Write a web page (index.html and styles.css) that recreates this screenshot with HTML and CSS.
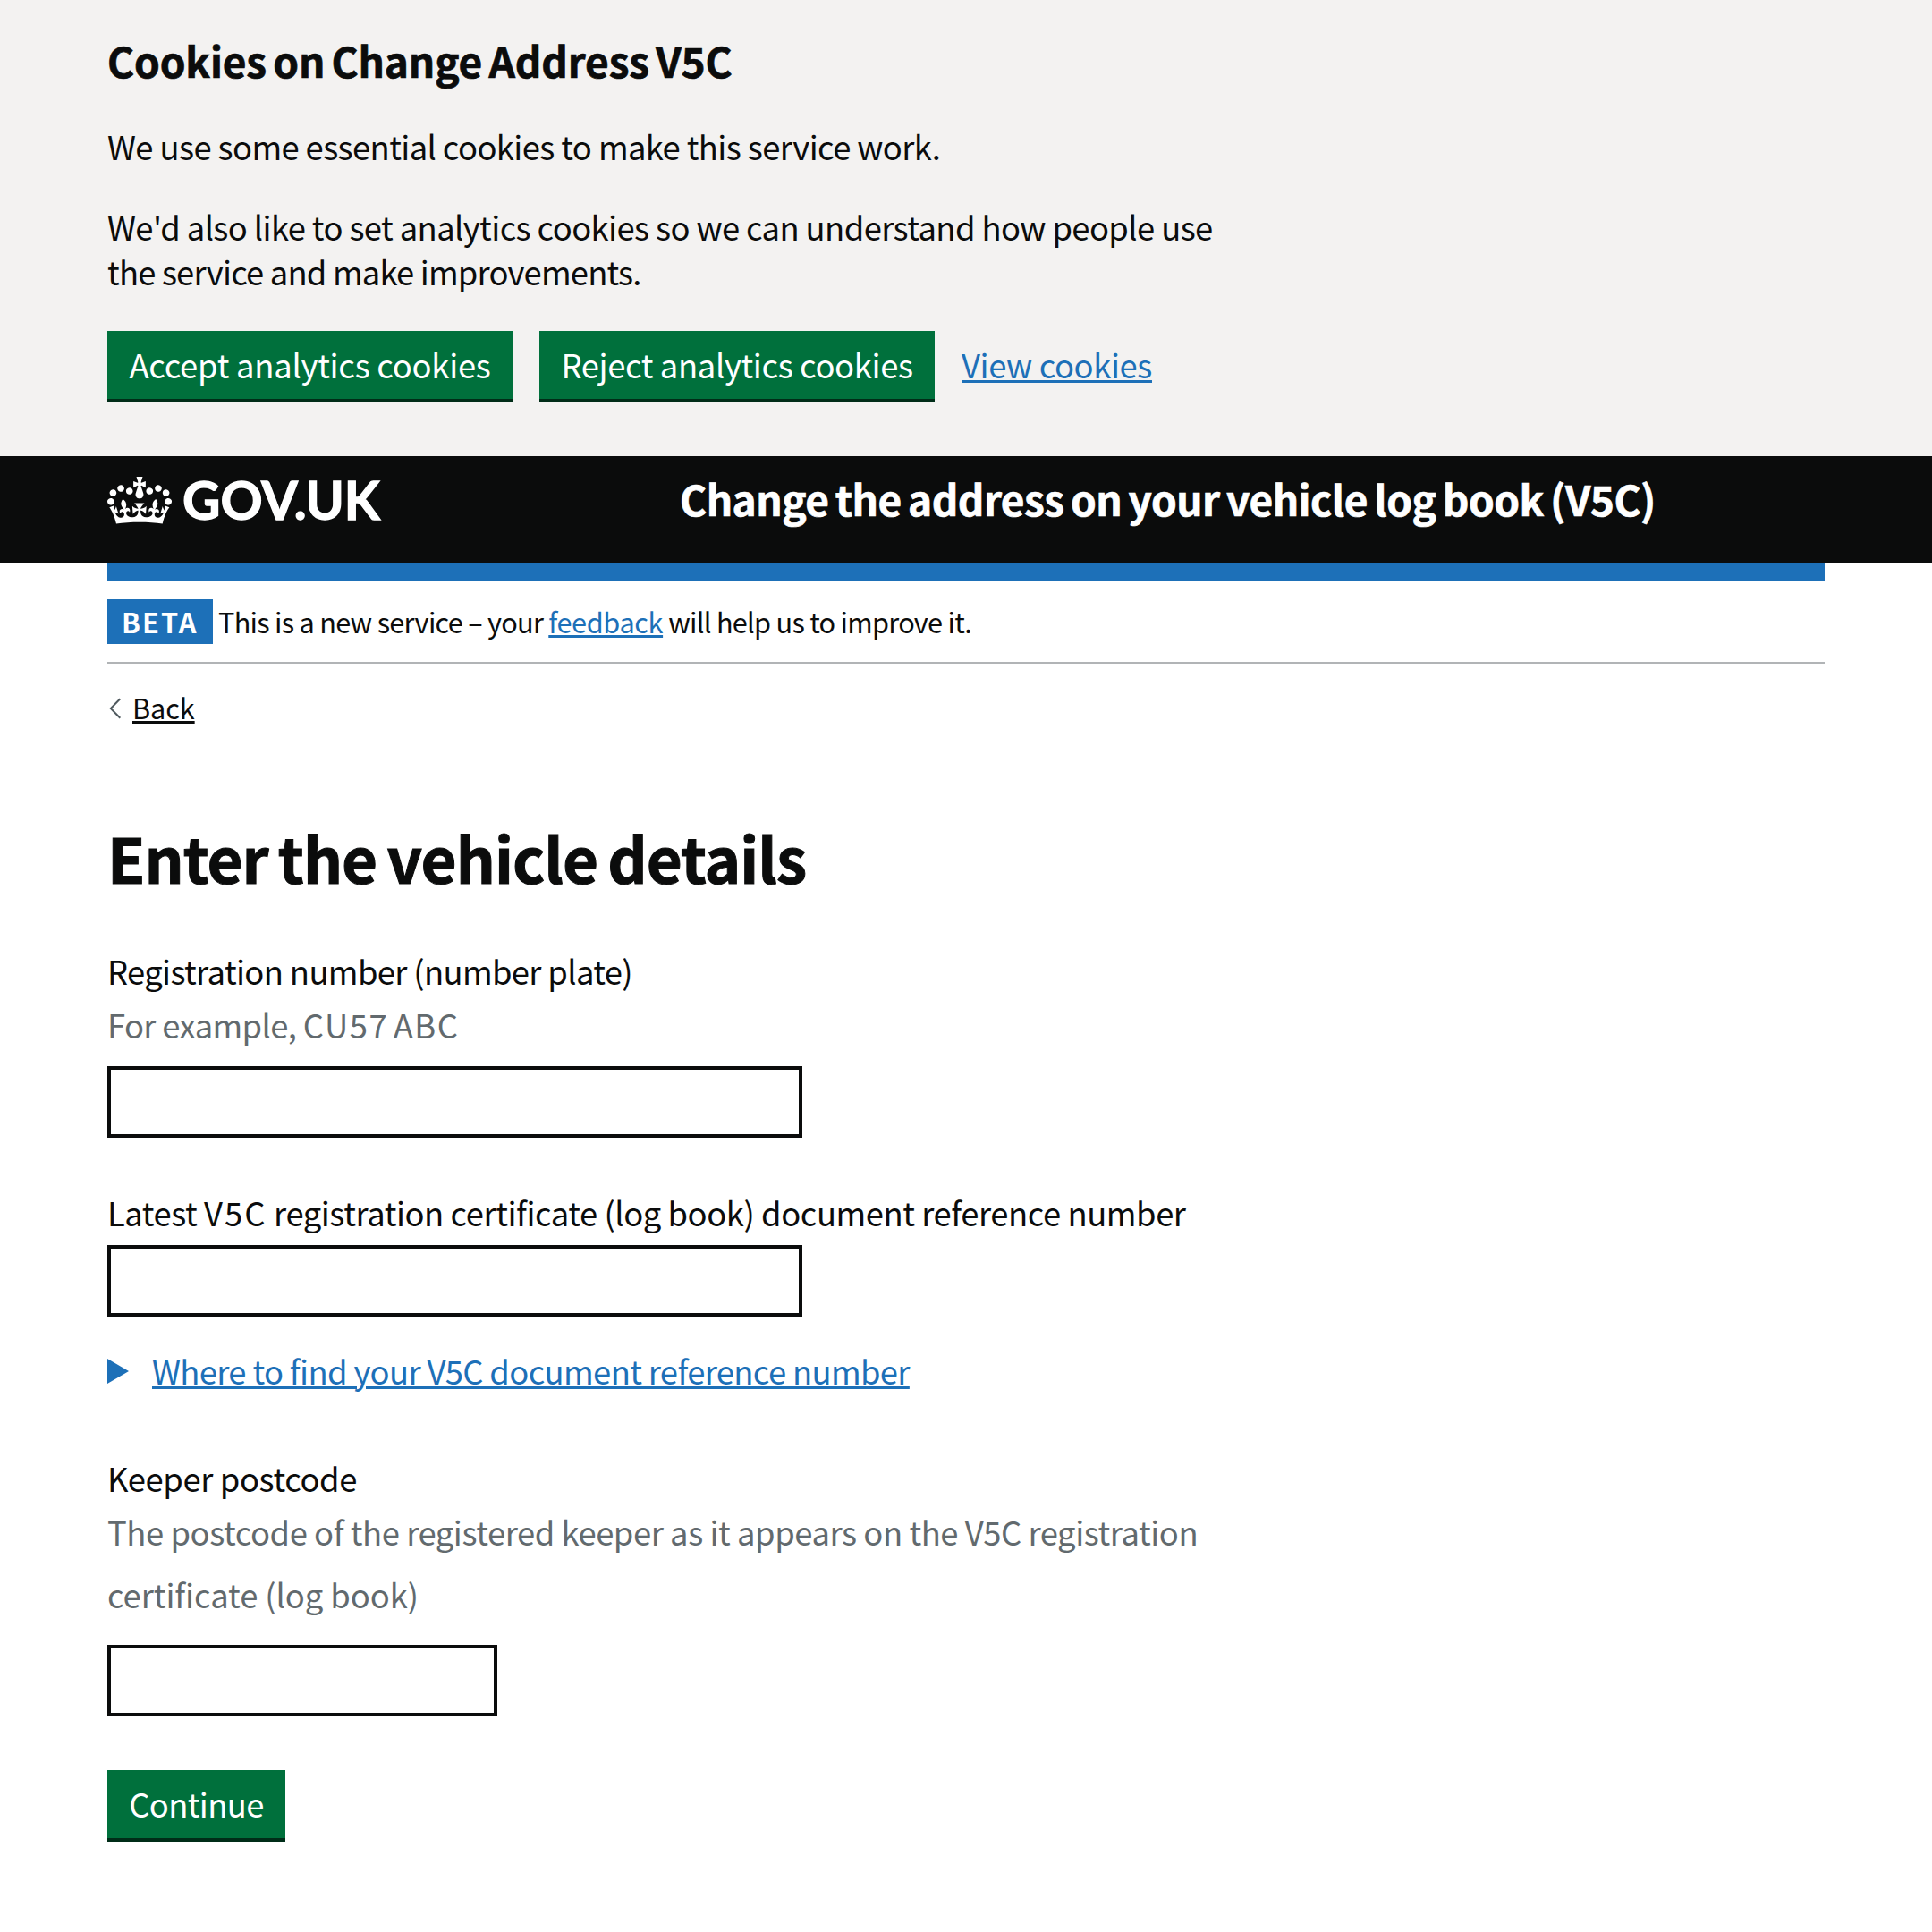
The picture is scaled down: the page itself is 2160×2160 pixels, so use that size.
FILE: index.html
```html
<!DOCTYPE html>
<html lang="en">
<head>
<meta charset="utf-8">
<title>Enter the vehicle details</title>
<link rel="stylesheet" href="styles.css">
</head>
<body>
<section class="cookie-banner">
  <h2 class="cookie-title">Cookies on Change Address V5C</h2>
  <p class="text text-essential">We use some essential cookies to make this service work.</p>
  <p class="text text-set">We'd also like to set analytics cookies so we can understand how people use<br><span class="text-set-end">the service and make improvements.</span></p>
  <div class="button-group">
    <button class="button button-accept">Accept analytics cookies</button>
    <button class="button button-reject">Reject analytics cookies</button>
    <a class="link" href="#">View cookies</a>
  </div>
</section>
<header class="header">
  <a class="logo" href="#">
    <svg class="crown" viewBox="0 0 132 97" width="72" height="53"><path fill="currentColor" fill-rule="evenodd" d="M25 30.2c3.5 1.5 7.7-.2 9.1-3.7 1.5-3.6-.2-7.8-3.9-9.2-3.6-1.4-7.6.3-9.1 3.9-1.4 3.5.3 7.5 3.9 9zM9 39.5c3.6 1.5 7.8-.2 9.2-3.7 1.5-3.6-.2-7.8-3.9-9.1-3.6-1.5-7.6.2-9.1 3.8-1.4 3.5.3 7.5 3.8 9zM4.4 57.2c3.5 1.5 7.7-.2 9.1-3.8 1.5-3.6-.2-7.7-3.9-9.1-3.5-1.5-7.6.3-9.1 3.8-1.4 3.5.3 7.6 3.9 9.1zm38.3-21.4c3.5 1.5 7.7-.2 9.1-3.8 1.5-3.6-.2-7.7-3.9-9.1-3.6-1.5-7.6.3-9.1 3.8-1.3 3.6.4 7.7 3.9 9.1zm64.4-5.6c-3.6 1.5-7.8-.2-9.1-3.7-1.5-3.6.2-7.8 3.8-9.2 3.6-1.4 7.7.3 9.2 3.9 1.3 3.5-.4 7.5-3.9 9zm15.9 9.3c-3.6 1.5-7.7-.2-9.1-3.7-1.5-3.6.2-7.8 3.7-9.1 3.6-1.5 7.7.2 9.2 3.8 1.5 3.5-.3 7.5-3.8 9zm4.7 17.7c-3.6 1.5-7.8-.2-9.2-3.8-1.5-3.6.2-7.7 3.9-9.1 3.6-1.5 7.7.3 9.2 3.8 1.3 3.5-.4 7.6-3.9 9.1zM89.3 35.8c-3.6 1.5-7.8-.2-9.2-3.8-1.4-3.6.2-7.7 3.9-9.1 3.6-1.5 7.7.3 9.2 3.8 1.4 3.6-.3 7.7-3.9 9.1zM69.7 17.7l8.9 4.7V9.3l-8.9 2.8c-.2-.3-.5-.6-.9-.9L72.4 0H59.6l3.5 11.2c-.3.3-.6.5-.9.9l-8.8-2.8v13.1l8.8-4.7c.3.3.6.7.9.9l-5 15.4v.1c-.2.8-.4 1.6-.4 2.4 0 4.1 3.1 7.5 7 8.1h.2c.3 0 .7.1 1 .1.4 0 .7 0 1-.1h.2c4-.6 7.1-4.1 7.1-8.1 0-.8-.1-1.7-.4-2.4V34l-5.1-15.4c.4-.2.7-.6 1-.9zM66 92.8c16.9 0 32.8 1.1 47.1 3.2 4-16.9 8.9-26.7 14-33.5l-9.6-3.4c1 4.9 1.1 7.2 0 10.2-1.5-1.4-3-4.3-4.2-8.7L108.6 76c2.8-2 5-3.2 7.5-3.3-4.4 9.4-10 11.9-13.6 11.2-4.3-.8-6.3-4.6-5.6-7.9 1-4.7 5.7-5.9 8-.5 4.3-8.7-3-11.4-7.6-8.8 7.1-7.2 7.9-13.5 2.1-21.1-8 6.1-8.1 12.3-4.5 20.8-4.7-5.4-12.1-2.5-9.5 6.2 3.4-5.2 7.9-2 7.2 3.1-.6 4.3-6.4 7.8-13.5 7.2-10.3-.9-10.9-8-11.2-13.8 2.5-.5 7.1 1.8 11 7.3L80.2 60c-4.1 4.4-8 5.3-12.3 5.4 1.4-4.4 8-11.6 8-11.6H55.5s6.4 7.2 7.9 11.6c-4.2-.1-8-1-12.3-5.4l1.4 16.4c3.9-5.5 8.5-7.7 10.9-7.3-.3 5.8-.9 12.8-11.1 13.8-7.2.6-12.9-2.9-13.5-7.2-.7-5 3.8-8.3 7.1-3.1 2.7-8.7-4.6-11.6-9.4-6.2 3.7-8.5 3.6-14.7-4.6-20.8-5.8 7.6-5 13.9 2.2 21.1-4.7-2.6-11.9.1-7.7 8.8 2.3-5.5 7.1-4.2 8.1.5.7 3.3-1.3 7.1-5.7 7.9-3.5.7-9-1.8-13.5-11.2 2.5.1 4.7 1.3 7.5 3.3l-4.7-15.4c-1.2 4.4-2.7 7.2-4.3 8.7-1.1-3-.9-5.3 0-10.2l-9.5 3.4c5 6.9 9.9 16.7 14 33.5 14.8-2.1 30.8-3.2 47.7-3.2z"/></svg>
    <span class="logo-text">GOV.UK</span>
  </a>
  <a class="service-name" href="#">Change the address on your vehicle log book (V5C)</a>
</header>
<div class="container">
  <div class="header-bar"></div>
  <div class="phase-banner">
    <strong class="tag">BETA</strong>
    <p class="phase-text">This is a new service – your <a class="link link-feedback" href="#">feedback</a> will help us to improve it.</p>
  </div>
  <a class="back-link" href="#"><svg class="chevron" width="14" height="24" viewBox="0 0 14 24"><path d="M12.3 1.2 1.8 12l10.5 10.8" fill="none" stroke="#505a5f" stroke-width="2"/></svg><span class="back-text">Back</span></a>
  <main>
    <h1 class="title">Enter the vehicle details</h1>
    <form>
      <div class="group">
        <label class="text label-reg" for="reg">Registration number (number plate)</label>
        <div class="text hint hint-reg">For example, <span class="plate">CU57 ABC</span></div>
        <input class="input" id="reg" type="text">
      </div>
      <div class="group group-ref">
        <label class="text label-ref" for="ref">Latest <span class="doc">V5C</span> registration certificate (log book) document reference number</label>
        <input class="input input-ref" id="ref" type="text">
      </div>
      <div class="details"><span class="triangle"></span><a class="link link-where" href="#">Where to find your V5C document reference number</a></div>
      <div class="group group-post">
        <label class="text label-post" for="post">Keeper postcode</label>
        <div class="text hint hint-post">The postcode of the registered keeper as it appears on the V5C registration<br><span class="hint-post-end">certificate (log book)</span></div>
        <input class="input input-post" id="post" type="text">
      </div>
      <button class="button button-continue">Continue</button>
    </form>
  </main>
</div>
</body>
</html>
```
FILE: styles.css
```css
* { box-sizing: border-box; }
body { min-height: 2160px; margin: 0; background: #fff; color: #0b0c0c; font: 400 36.4px/50px "Noto Sans CJK JP", "Noto Sans", sans-serif; }
h1, h2, p { margin: 0; }

.cookie-banner { height: 510px; padding: 37px 120px 0; background: #f3f2f1; }
.cookie-title { margin-bottom: 41px; font-size: 46px; line-height: 60px; font-weight: 700; letter-spacing: -.155px; word-spacing: -3px; -webkit-text-stroke: .7px; }
.text { display: block; white-space: nowrap; }
.text-essential { letter-spacing: -.6px; }
.text-set { margin-top: 40px; letter-spacing: -.6px; }
.text-set-end { letter-spacing: -.81px; }

.button-group { display: flex; gap: 30px; margin-top: 42px; }
.button { display: block; height: 80px; padding: 12px 0 14px; border: 0; border-bottom: 4px solid #002d18; border-radius: 0; background: #00703c; color: #fff; font: inherit; text-align: center; white-space: nowrap; }
.button-accept { width: 453px; letter-spacing: -.26px; }
.button-reject { width: 442px; letter-spacing: -.37px; }
.link { color: #1d70b8; letter-spacing: -.392px; text-decoration: underline; text-decoration-thickness: 3px; text-underline-offset: 2px; white-space: nowrap; }
.button-group .link { padding-top: 12px; }

.header { display: grid; grid-template-columns: 640px 1fr; height: 120px; padding: 17px 120px 0; background: #0b0c0c; color: #fff; }
.logo { display: flex; gap: 12px; color: #fff; text-decoration: none; }
.crown { margin-top: 6px; }
.logo-text { margin-top: 1px; font: 700 58.4px/60px Lato, sans-serif; -webkit-text-stroke: 1.3px; }
.service-name { color: #fff; font-size: 46px; line-height: 60px; font-weight: 700; letter-spacing: -.54px; word-spacing: -2.5px; -webkit-text-stroke: .7px; text-decoration: none; white-space: nowrap; }

.container { padding: 0 120px; }
.header-bar { height: 20px; background: #1d70b8; }
.phase-banner { display: flex; gap: 6px; height: 92px; padding: 20px 0; border-bottom: 2px solid #b1b4b6; font-size: 30.7px; line-height: 49px; }
.tag { width: 118px; height: 50px; padding-left: 16px; background: #1d70b8; color: #fff; font-weight: 700; letter-spacing: 2.1px; }
.phase-text { letter-spacing: -.73px; white-space: pre; }
.link-feedback { letter-spacing: -.4px; }
.back-link { display: flex; width: max-content; margin-top: 29px; color: #0b0c0c; font-size: 30.7px; line-height: 40px; text-decoration: none; }
.chevron { margin: 9px 12px 0 2px; }
.back-text { letter-spacing: -.1px; text-decoration: underline; text-decoration-thickness: 3px; text-underline-offset: 2px; }

.title { margin-top: 107px; font-size: 69px; line-height: 80px; font-weight: 700; letter-spacing: -.98px; word-spacing: -3.5px; -webkit-text-stroke: 1px; white-space: nowrap; }
.group { margin-top: 62px; }
.label-reg { letter-spacing: -.64px; }
.label-ref { letter-spacing: -.44px; }
.doc { letter-spacing: 2px; }
.label-post { letter-spacing: -.4px; }
.hint { color: #626a6e; }
.hint-reg { margin-top: 10px; letter-spacing: -.63px; }
.plate { letter-spacing: 1.5px; word-spacing: -4px; }
.input { display: block; width: 777px; height: 80px; margin-top: 22px; border: 4px solid #0b0c0c; border-radius: 0; background: #fff; font: inherit; }
.group-ref { margin-top: 58px; }
.input-ref { margin-top: 12px; }
.details { display: flex; gap: 26px; margin-top: 35px; }
.triangle { width: 24px; height: 28px; margin-top: 12px; background: #1d70b8; clip-path: polygon(0 0, 100% 50%, 0 100%); }
.link-where { letter-spacing: -.64px; }
.group-post { margin-top: 70px; }
.hint-post { line-height: 70px; letter-spacing: -.44px; }
.hint-post-end { letter-spacing: -.067px; }
.input-post { width: 436px; }
.button-continue { width: 199px; margin-top: 60px; letter-spacing: -.65px; }
```
